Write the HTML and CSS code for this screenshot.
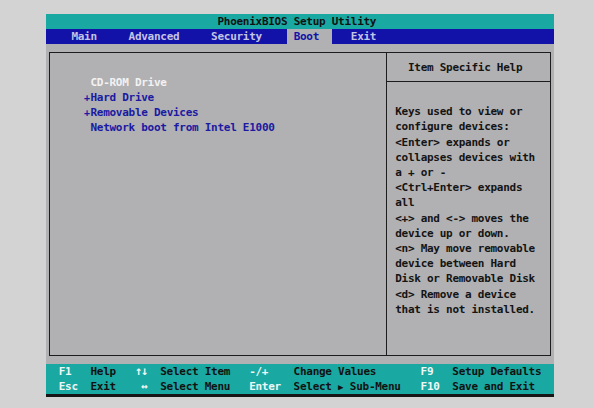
FILE: index.html
```html
<!DOCTYPE html>
<html lang="en">
<head>
<meta charset="utf-8">
<title>PhoenixBIOS Setup Utility</title>
<link rel="stylesheet" href="styles.css">
</head>
<body>
<div class="screen">
  <header class="titlebar">PhoenixBIOS Setup Utility</header>
  <nav class="menubar">
    <span class="tab tab-main">Main</span>
    <span class="tab tab-adv">Advanced</span>
    <span class="tab tab-sec">Security</span>
    <span class="tab tab-boot">Boot</span>
    <span class="tab tab-exit">Exit</span>
  </nav>
  <main class="main">
    <div class="box">
      <section class="left">
        <div class="item item-sel"><span class="mark"></span>CD-ROM Drive</div>
        <div class="item"><span class="mark">+</span>Hard Drive</div>
        <div class="item"><span class="mark">+</span>Removable Devices</div>
        <div class="item"><span class="mark"></span>Network boot from Intel E1000</div>
      </section>
      <aside class="right">
        <div class="help-head">Item Specific Help</div>
        <div class="help-body">
          <div>Keys used to view or</div>
          <div>configure devices:</div>
          <div>&lt;Enter&gt; expands or</div>
          <div>collapses devices with</div>
          <div>a + or -</div>
          <div>&lt;Ctrl+Enter&gt; expands</div>
          <div>all</div>
          <div>&lt;+&gt; and &lt;-&gt; moves the</div>
          <div>device up or down.</div>
          <div>&lt;n&gt; May move removable</div>
          <div>device between Hard</div>
          <div>Disk or Removable Disk</div>
          <div>&lt;d&gt; Remove a device</div>
          <div>that is not installed.</div>
        </div>
      </aside>
    </div>
  </main>
  <footer class="footer">
    <span class="key">F1</span><span class="desc">Help</span><span class="key arrows">↑↓</span><span class="desc">Select Item</span><span class="key">-/+</span><span class="desc">Change Values</span><span class="key">F9</span><span class="desc">Setup Defaults</span>
    <span class="key">Esc</span><span class="desc">Exit</span><span class="key lr-arrow">↔</span><span class="desc">Select Menu</span><span class="key">Enter</span><span class="desc">Select <span class="tri">▶</span> Sub-Menu</span><span class="key">F10</span><span class="desc">Save and Exit</span>
  </footer>
</div>
</body>
</html>
```
FILE: styles.css
```css
:root {
  --c: 6.35px;
  --r: 15.2px;
  --teal: #1aa8a2;
  --blue: #1212a8;
  --grey: #b1b0b2;
}
html, body {
  margin: 0;
  padding: 0;
}
body {
  background: #d3d3d3;
  width: 593px;
  height: 408px;
  overflow: hidden;
}
.screen {
  margin: 14px 0 0 46px;
  width: calc(80 * var(--c));
  font-family: "DejaVu Sans Mono", "Liberation Mono", monospace;
  font-size: 11px;
  font-weight: bold;
  letter-spacing: -0.272px;
  line-height: var(--r);
  white-space: nowrap;
}
.titlebar {
  display: block;
  height: var(--r);
  background: var(--teal);
  color: #111;
  padding-left: calc(27 * var(--c));
}
.menubar {
  display: flex;
  height: var(--r);
  background: var(--blue);
  color: #c4c4e4;
}
.tab-main { margin-left: calc(4 * var(--c)); }
.tab-adv { margin-left: calc(5 * var(--c)); }
.tab-sec { margin-left: calc(5 * var(--c)); }
.tab-boot {
  margin-left: calc(4 * var(--c));
  padding: 0 calc(2 * var(--c)) 0 var(--c);
  background: var(--grey);
  color: var(--blue);
}
.tab-exit { margin-left: calc(3 * var(--c)); }

.main {
  display: block;
  box-sizing: border-box;
  height: calc(21 * var(--r));
  background: var(--grey);
  padding: calc(var(--r) / 2) calc(var(--c) / 2) 0;
}
.box {
  box-sizing: border-box;
  height: calc(20 * var(--r));
  border: 1px solid #1c1c1c;
  display: flex;
}
.left {
  width: calc(53 * var(--c) - 1px);
  box-sizing: border-box;
  padding: calc(1.5 * var(--r) - 1px) 0 0 calc(5.5 * var(--c) - 1px);
  color: #1a1aa2;
}
.item-sel { color: #f2f2f2; }
.mark { display: inline-block; width: var(--c); font-size: 10px; }
.right {
  flex: 1;
  border-left: 1px solid #1c1c1c;
  color: #141414;
}
.help-head {
  box-sizing: border-box;
  height: calc(2 * var(--r) - 1px);
  border-bottom: 1px solid #1c1c1c;
  padding: calc(var(--r) / 2 - 1px) 0 0 calc(3.5 * var(--c) - 1px);
}
.help-body {
  padding: calc(1.5 * var(--r) - 1px) 0 0 calc(1.5 * var(--c) - 1px);
}

.footer {
  display: grid;
  grid-template-columns:
    calc(5 * var(--c)) calc(7 * var(--c)) calc(4 * var(--c)) calc(14 * var(--c))
    calc(7 * var(--c)) calc(20 * var(--c)) calc(5 * var(--c)) 1fr;
  grid-auto-rows: var(--r);
  background: var(--teal);
  padding-left: calc(2 * var(--c));
  border-bottom: 3px solid #161616;
}
.key { color: #eef7f6; }
.desc { color: #121212; }
.arrows { font-size: 12px; letter-spacing: -1px; }
.lr-arrow { padding-left: var(--c); }
.tri { font-size: 9px; letter-spacing: 0; }
```
